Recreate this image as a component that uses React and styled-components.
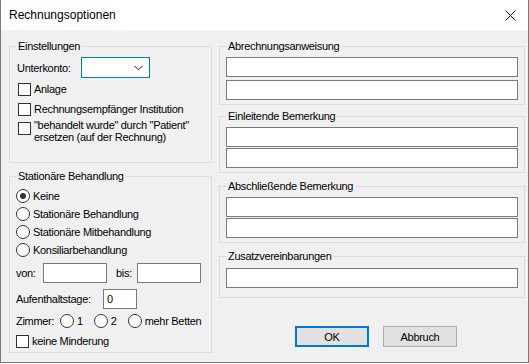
import React from "react"
import styled, { createGlobalStyle } from "styled-components"

const Global = createGlobalStyle`
  html, body { margin: 0; padding: 0; background: #fff; }
  body { font-family: "Liberation Sans", Arial, sans-serif; }
  * { box-sizing: border-box; }
`

const Window = styled.div`
  width: 529px;
  height: 363px;
  border: 1px solid #7a7a7a;
  border-top: none;
  display: flex;
  flex-direction: column;
  background: #f0f0f0;
`
const TitleBar = styled.div`
  height: 30px;
  background: #fff;
  display: flex;
  align-items: center;
  justify-content: space-between;
  padding: 0 12px 0 8px;
  font-size: 12px;
  color: #000;
`
const Client = styled.div`
  flex: 1;
  display: grid;
  grid-template-columns: 203px 306px;
  column-gap: 7px;
  padding: 9px 0 0 8px;
  font-size: 11px;
  letter-spacing: -0.3px;
  color: #000;
`
const Column = styled.div`
  display: flex;
  flex-direction: column;
`
const Group = styled.fieldset`
  margin: 0;
  margin-top: ${(p) => p.$mt || 0}px;
  padding: ${(p) => p.$pt || 4}px 6px ${(p) => p.$pb || 4}px 6px;
  border: 1px solid #dcdcdc;
  min-width: 0;
  height: ${(p) => (p.$h ? p.$h + "px" : "auto")};
  display: flex;
  flex-direction: column;
`
const Legend = styled.legend`
  padding: 0 2px;
  line-height: 14px;
  font-size: 11px;
`
const Row = styled.div`
  display: flex;
  align-items: ${(p) => p.$align || "center"};
  height: ${(p) => (p.$h ? p.$h + "px" : "auto")};
  margin-top: ${(p) => p.$mt || 0}px;
  margin-left: ${(p) => p.$ml || 0}px;
`
const Label = styled.span`
  width: ${(p) => (p.$w ? p.$w + "px" : "auto")};
  margin-left: ${(p) => p.$ml || 0}px;
  flex-shrink: 0;
  white-space: nowrap;
`
const Combo = styled.div`
  width: 69px;
  height: 21px;
  margin-left: 10px;
  background: #fff;
  border: 1px solid #0078d7;
  display: flex;
  align-items: center;
  justify-content: flex-end;
  padding-right: 6px;
`
const Check = styled.span`
  width: 13px;
  height: 13px;
  border: 1px solid #333;
  background: #fff;
  flex-shrink: 0;
  margin-top: ${(p) => p.$mt || 0}px;
  margin-right: 3px;
`
const CheckText = styled.span`
  line-height: 12px;
`
const Radio = styled.span`
  width: 14px;
  height: 14px;
  border-radius: 50%;
  border: 1px solid #333;
  background: #fff;
  flex-shrink: 0;
  margin-left: ${(p) => p.$ml || 0}px;
  margin-right: 3px;
  display: flex;
  align-items: center;
  justify-content: center;
  &::after {
    content: "";
    width: 6px;
    height: 6px;
    border-radius: 50%;
    background: ${(p) => (p.$on ? "#333" : "transparent")};
  }
`
const Field = styled.div`
  width: ${(p) => (p.$w ? p.$w + "px" : "100%")};
  height: 20px;
  background: #fff;
  border: 1px solid #7a7a7a;
  margin-top: ${(p) => p.$mt || 0}px;
  padding-left: 3px;
  line-height: 18px;
  flex-shrink: 0;
`
const Buttons = styled.div`
  display: flex;
  gap: 14px;
  margin: 28px 0 0 76px;
`
const Button = styled.div`
  width: 74px;
  height: 21px;
  background: #e1e1e1;
  border: ${(p) => (p.$default ? "2px solid #0078d7" : "1px solid #adadad")};
  display: flex;
  align-items: center;
  justify-content: center;
`

const Chevron = () => (
  <svg width="9" height="6" viewBox="0 0 9 6">
    <path d="M0.5 0.8 L4.5 4.6 L8.5 0.8" fill="none" stroke="#555" strokeWidth="1.1" />
  </svg>
)

const Close = () => (
  <svg width="11" height="11" viewBox="0 0 11 11">
    <path d="M0.5 0.5 L10.5 10.5 M10.5 0.5 L0.5 10.5" stroke="#111" strokeWidth="1" />
  </svg>
)

const App = () => {
  return (
    <>
      <Global />
      <Window>
        <TitleBar>
          <span>Rechnungsoptionen</span>
          <Close />
        </TitleBar>
        <Client>
          <Column>
            <Group $h={124}>
              <Legend>Einstellungen</Legend>
              <Row $h={21}>
                <Label $ml={1}>Unterkonto:</Label>
                <Combo>
                  <Chevron />
                </Combo>
              </Row>
              <Row $h={16} $mt={3} $ml={2}>
                <Check />
                <CheckText>Anlage</CheckText>
              </Row>
              <Row $h={16} $mt={4} $ml={2}>
                <Check />
                <CheckText>Rechnungsempfänger Institution</CheckText>
              </Row>
              <Row $mt={2} $ml={2} $align="flex-start">
                <Check $mt={3} />
                <CheckText>
                  "behandelt wurde" durch "Patient"
                  <br />
                  ersetzen (auf der Rechnung)
                </CheckText>
              </Row>
            </Group>

            <Group $h={184} $mt={6}>
              <Legend>Stationäre Behandlung</Legend>
              <Row $h={18}>
                <Radio $on />
                Keine
              </Row>
              <Row $h={18}>
                <Radio />
                Stationäre Behandlung
              </Row>
              <Row $h={18}>
                <Radio />
                Stationäre Mitbehandlung
              </Row>
              <Row $h={18}>
                <Radio />
                Konsiliarbehandlung
              </Row>
              <Row $h={20} $mt={4}>
                <Label $w={27}>von:</Label>
                <Field $w={64} />
                <Label $w={21} $ml={9}>bis:</Label>
                <Field $w={64} />
              </Row>
              <Row $h={20} $mt={6}>
                <Label $w={87}>Aufenthaltstage:</Label>
                <Field $w={34}>0</Field>
              </Row>
              <Row $h={18} $mt={3}>
                <Label $w={44}>Zimmer:</Label>
                <Radio />1
                <Radio $ml={11} />2
                <Radio $ml={11} />mehr Betten
              </Row>
              <Row $h={18} $mt={2}>
                <Check />
                keine Minderung
              </Row>
            </Group>
          </Column>

          <Column>
            <Group>
              <Legend>Abrechnungsanweisung</Legend>
              <Field />
              <Field $mt={3} />
            </Group>
            <Group $mt={4}>
              <Legend>Einleitende Bemerkung</Legend>
              <Field />
              <Field $mt={1} />
            </Group>
            <Group $mt={6}>
              <Legend>Abschließende Bemerkung</Legend>
              <Field />
              <Field $mt={1} />
            </Group>
            <Group $mt={6} $pt={5} $pb={9}>
              <Legend>Zusatzvereinbarungen</Legend>
              <Field />
            </Group>
            <Buttons>
              <Button $default>OK</Button>
              <Button>Abbruch</Button>
            </Buttons>
          </Column>
        </Client>
      </Window>
    </>
  )
}

export default App
